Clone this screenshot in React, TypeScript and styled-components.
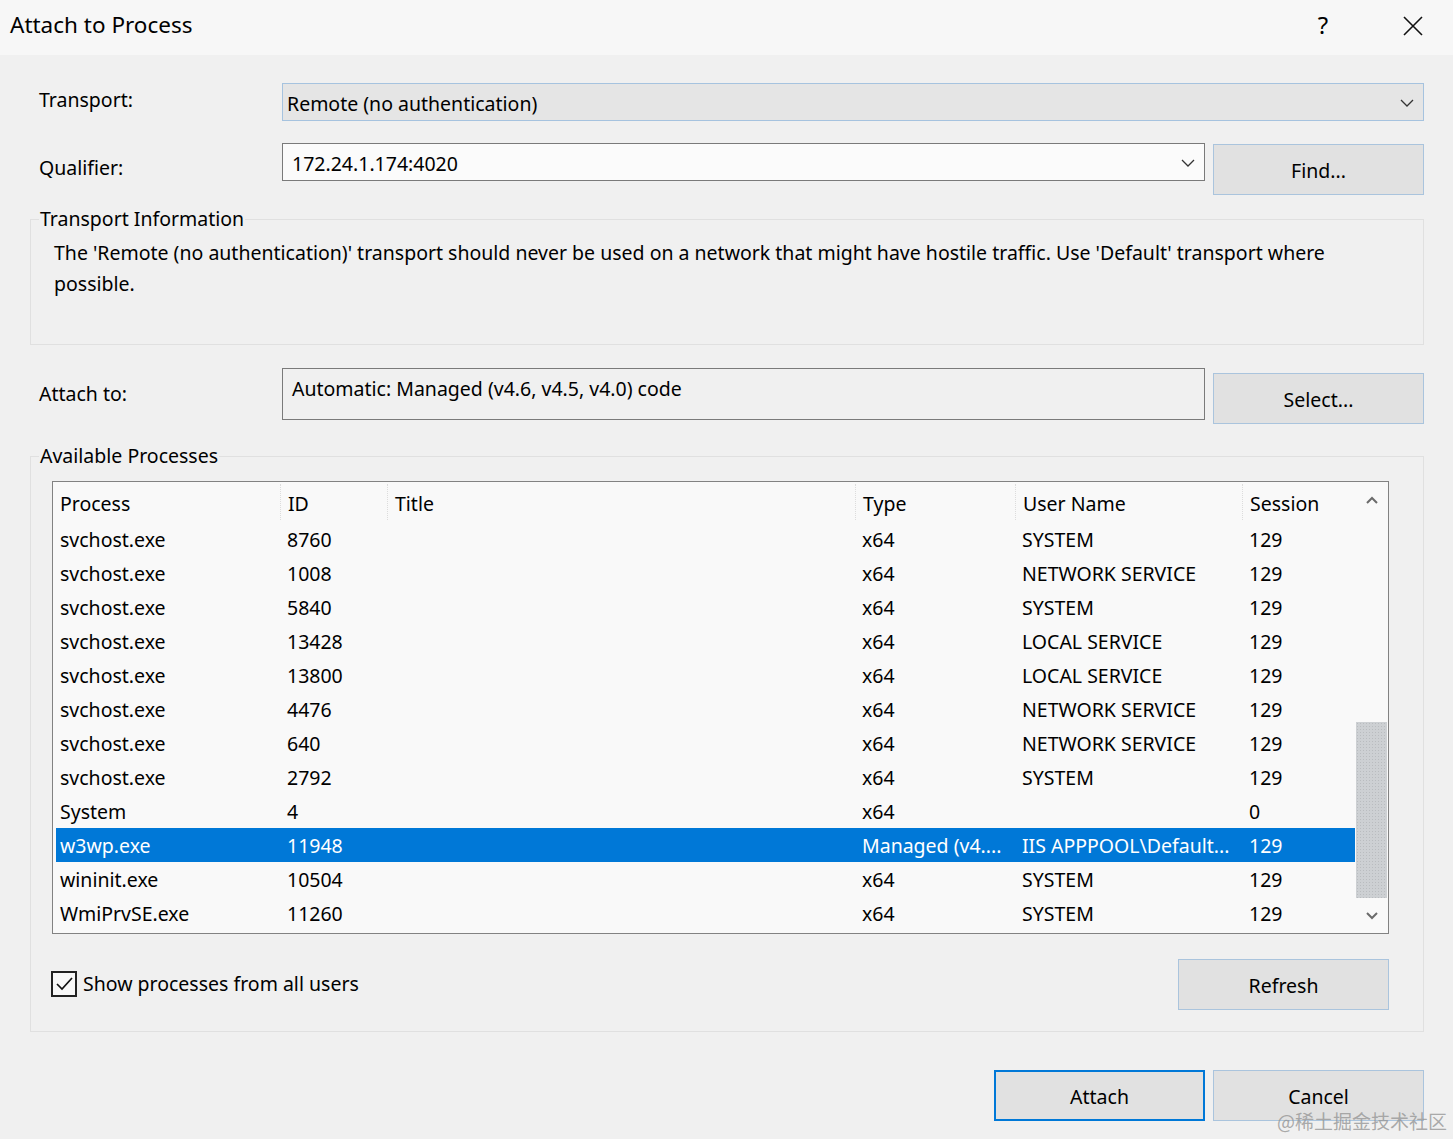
import styled, { createGlobalStyle } from 'styled-components';

const GlobalStyle = createGlobalStyle`
  html, body {
    margin: 0;
    padding: 0;
    width: 1453px;
    height: 1139px;
    overflow: hidden;
    background: #f0f0f0;
  }
  * {
    box-sizing: border-box;
  }
`;

const processes = [
  { name: 'svchost.exe', id: '8760', type: 'x64', user: 'SYSTEM', session: '129' },
  { name: 'svchost.exe', id: '1008', type: 'x64', user: 'NETWORK SERVICE', session: '129' },
  { name: 'svchost.exe', id: '5840', type: 'x64', user: 'SYSTEM', session: '129' },
  { name: 'svchost.exe', id: '13428', type: 'x64', user: 'LOCAL SERVICE', session: '129' },
  { name: 'svchost.exe', id: '13800', type: 'x64', user: 'LOCAL SERVICE', session: '129' },
  { name: 'svchost.exe', id: '4476', type: 'x64', user: 'NETWORK SERVICE', session: '129' },
  { name: 'svchost.exe', id: '640', type: 'x64', user: 'NETWORK SERVICE', session: '129' },
  { name: 'svchost.exe', id: '2792', type: 'x64', user: 'SYSTEM', session: '129' },
  { name: 'System', id: '4', type: 'x64', user: '', session: '0' },
  { name: 'w3wp.exe', id: '11948', type: 'Managed (v4....', user: 'IIS APPPOOL\\Default...', session: '129', selected: true },
  { name: 'wininit.exe', id: '10504', type: 'x64', user: 'SYSTEM', session: '129' },
  { name: 'WmiPrvSE.exe', id: '11260', type: 'x64', user: 'SYSTEM', session: '129' },
];

const columns = ['Process', 'ID', 'Title', 'Type', 'User Name', 'Session'];
const gridCols = '224px 107px 468px 160px 227px 112px';

const Chevron = ({ up = false }: { up?: boolean }) => (
  <svg width="14" height="8" viewBox="0 0 14 8">
    <polyline
      points={up ? '1,7 7,1 13,7' : '1,1 7,7 13,1'}
      fill="none"
      stroke="#333"
      strokeWidth="1.3"
    />
  </svg>
);

const ScrollArrow = ({ up = false }: { up?: boolean }) => (
  <svg width="12" height="8" viewBox="0 0 12 8">
    <polyline
      points={up ? '1,7 6,2 11,7' : '1,1 6,6 11,1'}
      fill="none"
      stroke="#6b6b6b"
      strokeWidth="2"
    />
  </svg>
);

const App = () => {
  return (
    <>
      <GlobalStyle />
      <Dialog>
        <TitleBar>
          <Title>Attach to Process</Title>
          <TitleButtons>
            <HelpButton>?</HelpButton>
            <CloseButton>
              <svg width="20" height="20" viewBox="0 0 20 20">
                <path d="M1 1 L19 19 M19 1 L1 19" stroke="#111" strokeWidth="1.6" />
              </svg>
            </CloseButton>
          </TitleButtons>
        </TitleBar>

        <Body>
          <FormRow $top={28}>
            <Label $pad={3}>Transport:</Label>
            <ComboBox $variant="select">
              <span>Remote (no authentication)</span>
              <Chevron />
            </ComboBox>
          </FormRow>

          <FormRow $top={22}>
            <Label $pad={11}>Qualifier:</Label>
            <ComboBox $variant="input" $narrow>
              <span>172.24.1.174:4020</span>
              <Chevron />
            </ComboBox>
            <Button $top={1}>Find...</Button>
          </FormRow>

          <GroupBox $top={12} $height={138}>
            <Legend>Transport Information</Legend>
            <InfoText>
              The 'Remote (no authentication)' transport should never be used on a network that might
              have hostile traffic. Use 'Default' transport where possible.
            </InfoText>
          </GroupBox>

          <FormRow $top={23}>
            <Label $pad={12}>Attach to:</Label>
            <CodeBox>Automatic: Managed (v4.6, v4.5, v4.0) code</CodeBox>
            <Button $top={5}>Select...</Button>
          </FormRow>

          <GroupBox $top={20} $height={588}>
            <Legend>Available Processes</Legend>
            <ListView>
              <ListBody>
                <HeaderRow>
                  {columns.map((c, i) => (
                    <HeaderCell key={c} $first={i === 0}>
                      {c}
                    </HeaderCell>
                  ))}
                </HeaderRow>
                {processes.map((p, i) => (
                  <Row key={i} $selected={!!p.selected}>
                    <Cell $first>{p.name}</Cell>
                    <Cell>{p.id}</Cell>
                    <Cell></Cell>
                    <Cell>{p.type}</Cell>
                    <Cell>{p.user}</Cell>
                    <Cell>{p.session}</Cell>
                  </Row>
                ))}
              </ListBody>
              <ScrollBar>
                <ScrollButton>
                  <ScrollArrow up />
                </ScrollButton>
                <Track>
                  <Thumb />
                </Track>
                <ScrollButton>
                  <ScrollArrow />
                </ScrollButton>
              </ScrollBar>
            </ListView>

            <OptionsRow>
              <CheckLabel>
                <CheckBox>
                  <svg width="19" height="16" viewBox="0 0 19 16">
                    <polyline points="2,8 7,13 17,2" fill="none" stroke="#111" strokeWidth="1.7" />
                  </svg>
                </CheckBox>
                Show processes from all users
              </CheckLabel>
              <Button>Refresh</Button>
            </OptionsRow>
          </GroupBox>

          <Footer>
            <Button $default>Attach</Button>
            <Button>Cancel</Button>
          </Footer>
        </Body>
        <Watermark>@稀土掘金技术社区</Watermark>
      </Dialog>
    </>
  );
};

const Dialog = styled.div`
  position: relative;
  width: 1453px;
  height: 1139px;
  background: #f0f0f0;
  font-family: 'Noto Sans', 'Open Sans', sans-serif;
  font-size: 19.5px;
  color: #000;
  display: flex;
  flex-direction: column;
`;

const TitleBar = styled.div`
  height: 55px;
  background: #f7f7f7;
  display: flex;
  align-items: center;
  justify-content: space-between;
  padding: 0 0 6px 10px;
`;

const Title = styled.div`
  font-size: 22.5px;
`;

const TitleButtons = styled.div`
  display: flex;
  align-items: center;
`;

const HelpButton = styled.div`
  width: 100px;
  text-align: center;
  font-size: 24px;
`;

const CloseButton = styled.div`
  width: 80px;
  display: flex;
  justify-content: center;
  padding-top: 2px;
`;

const Body = styled.div`
  padding: 0 29px 0 30px;
  display: flex;
  flex-direction: column;
`;

const FormRow = styled.div<{ $top: number }>`
  display: flex;
  align-items: flex-start;
  gap: 8px;
  margin-top: ${(p) => p.$top}px;
`;

const Label = styled.div<{ $pad: number }>`
  width: 252px;
  padding: ${(p) => p.$pad}px 0 0 9px;
  flex-shrink: 0;
  margin-right: -8px;
`;

const ComboBox = styled.div<{ $variant: 'select' | 'input'; $narrow?: boolean }>`
  height: 38px;
  flex: ${(p) => (p.$narrow ? '0 0 923px' : '1')};
  display: flex;
  align-items: center;
  justify-content: space-between;
  padding: 2px 9px 0 ${(p) => (p.$variant === 'select' ? 4 : 9)}px;
  background: ${(p) => (p.$variant === 'select' ? '#e5e5e5' : '#fbfbfb')};
  border: 1px solid ${(p) => (p.$variant === 'select' ? '#a6c3df' : '#7a7a7a')};
`;

const Button = styled.div<{ $top?: number; $default?: boolean }>`
  width: 211px;
  height: 51px;
  margin-top: ${(p) => p.$top ?? 0}px;
  display: flex;
  align-items: center;
  justify-content: center;
  padding-top: 2px;
  background: #e1e1e1;
  border: ${(p) => (p.$default ? '2px solid #0078d7' : '1px solid #aac4dd')};
  flex-shrink: 0;
`;

const GroupBox = styled.fieldset<{ $top: number; $height: number }>`
  margin: ${(p) => p.$top}px 0 0 0;
  padding: 0;
  height: ${(p) => p.$height}px;
  border: 1px solid #e0e0e0;
  min-width: 0;
`;

const Legend = styled.legend`
  margin-left: 8px;
  padding: 0 1px;
  line-height: 24px;
`;

const InfoText = styled.div`
  padding: 6px 60px 0 23px;
  line-height: 31px;
`;

const CodeBox = styled.div`
  flex: 0 0 923px;
  height: 52px;
  border: 1px solid #7a7a7a;
  padding: 5px 9px;
  line-height: 30px;
`;

const ListView = styled.div`
  margin: 13px 0 0 21px;
  width: 1337px;
  height: 453px;
  border: 1px solid #828282;
  background: #f9f9f9;
  display: flex;
  overflow: hidden;
`;

const ListBody = styled.div`
  flex: 1;
  padding-left: 3px;
`;

const HeaderRow = styled.div`
  display: grid;
  grid-template-columns: ${gridCols};
  height: 40px;
  align-items: center;
`;

const HeaderCell = styled.div<{ $first?: boolean }>`
  height: 36px;
  display: flex;
  align-items: center;
  padding-left: ${(p) => (p.$first ? 4 : 7)}px;
  border-left: ${(p) => (p.$first ? 'none' : '1px dotted #dcdcdc')};
  padding-top: 3px;
`;

const Row = styled.div<{ $selected: boolean }>`
  display: grid;
  grid-template-columns: ${gridCols};
  height: 34px;
  align-items: center;
  background: ${(p) => (p.$selected ? '#0078d7' : 'transparent')};
  color: ${(p) => (p.$selected ? '#fff' : '#000')};
`;

const Cell = styled.div<{ $first?: boolean }>`
  padding-left: ${(p) => (p.$first ? 4 : 7)}px;
  white-space: nowrap;
  overflow: hidden;
`;

const ScrollBar = styled.div`
  width: 33px;
  display: flex;
  flex-direction: column;
  background: #f9f9f9;
`;

const ScrollButton = styled.div`
  height: 38px;
  display: flex;
  align-items: center;
  justify-content: center;
`;

const Track = styled.div`
  flex: 1;
  padding: 205px 1px 0 1px;
`;

const Thumb = styled.div`
  height: 176px;
  background-color: #cdd0d3;
  background-image: radial-gradient(#b9bcbf 0.7px, transparent 0.8px);
  background-size: 3px 3px;
`;

const OptionsRow = styled.div`
  display: flex;
  align-items: center;
  justify-content: space-between;
  margin: 25px 0 0 20px;
  width: 1338px;
`;

const CheckLabel = styled.div`
  display: flex;
  align-items: center;
  gap: 6px;
  padding-bottom: 2px;
`;

const CheckBox = styled.div`
  width: 26px;
  height: 26px;
  border: 2px solid #222;
  background: #f8f8f8;
  display: flex;
  align-items: center;
  justify-content: center;
`;

const Footer = styled.div`
  display: flex;
  justify-content: flex-end;
  gap: 8px;
  margin-top: 38px;
`;

const Watermark = styled.div`
  position: absolute;
  right: 6px;
  bottom: 5px;
  font-family: 'Noto Sans CJK SC', sans-serif;
  font-size: 19px;
  color: rgba(150, 150, 150, 0.8);
`;

export default App;
